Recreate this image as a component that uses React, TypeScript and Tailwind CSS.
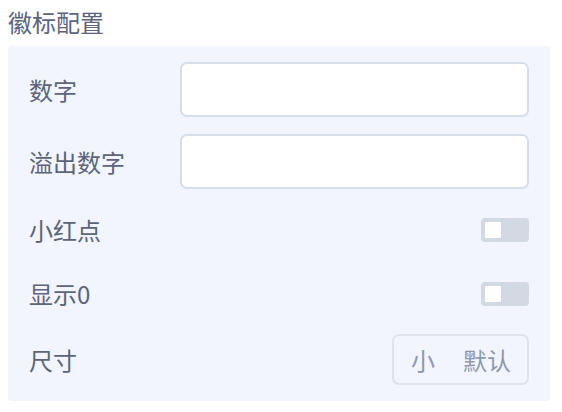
import React from 'react';

function Toggle() {
  return (
    <div className="w-[48px] h-[24px] rounded-[4px] bg-[#d3d9e3] flex items-center px-[4px]">
      <div className="w-[16px] h-[16px] bg-white rounded-[1px]" />
    </div>
  );
}

function Row({ label, children, className }: { label: string; children: React.ReactNode; className?: string }) {
  return (
    <div className={`flex items-center justify-between ${className ?? ''}`}>
      <span className="text-[24px] text-[#5b6479]">{label}</span>
      {children}
    </div>
  );
}

export default function App() {
  const font = { fontFamily: '"Noto Sans CJK SC", "Noto Sans", sans-serif' };
  return (
    <div className="w-[562px] h-[412px] bg-white pl-[8px] pr-[12px] pt-[4px]" style={font}>
      <h2 className="text-[24px] leading-[36px] text-[#5b6479] mb-[6px]">徽标配置</h2>
      <div className="bg-[#f2f5fd] rounded-[4px] pl-[21px] pr-[21px] pt-[16px] pb-[16px]">
        <Row label="数字" className="h-[55px]">
          <input className="w-[349px] h-[55px] bg-white border-2 border-[#d8dee9] rounded-[7px] outline-none" />
        </Row>
        <Row label="溢出数字" className="h-[55px] mt-[17px]">
          <input className="w-[349px] h-[55px] bg-white border-2 border-[#d8dee9] rounded-[7px] outline-none" />
        </Row>
        <Row label="小红点" className="h-[24px] mt-[29px]">
          <Toggle />
        </Row>
        <Row label="显示0" className="h-[24px] mt-[40px]">
          <Toggle />
        </Row>
        <Row label="尺寸" className="h-[51px] mt-[28px]">
          <div className="w-[137px] h-[51px] border-2 border-[#dde2ec] rounded-[7px] flex items-center text-[24px] text-[#8e98ad]">
            <span className="ml-[17px]">小</span>
            <span className="ml-[28px]">默认</span>
          </div>
        </Row>
      </div>
    </div>
  );
}
